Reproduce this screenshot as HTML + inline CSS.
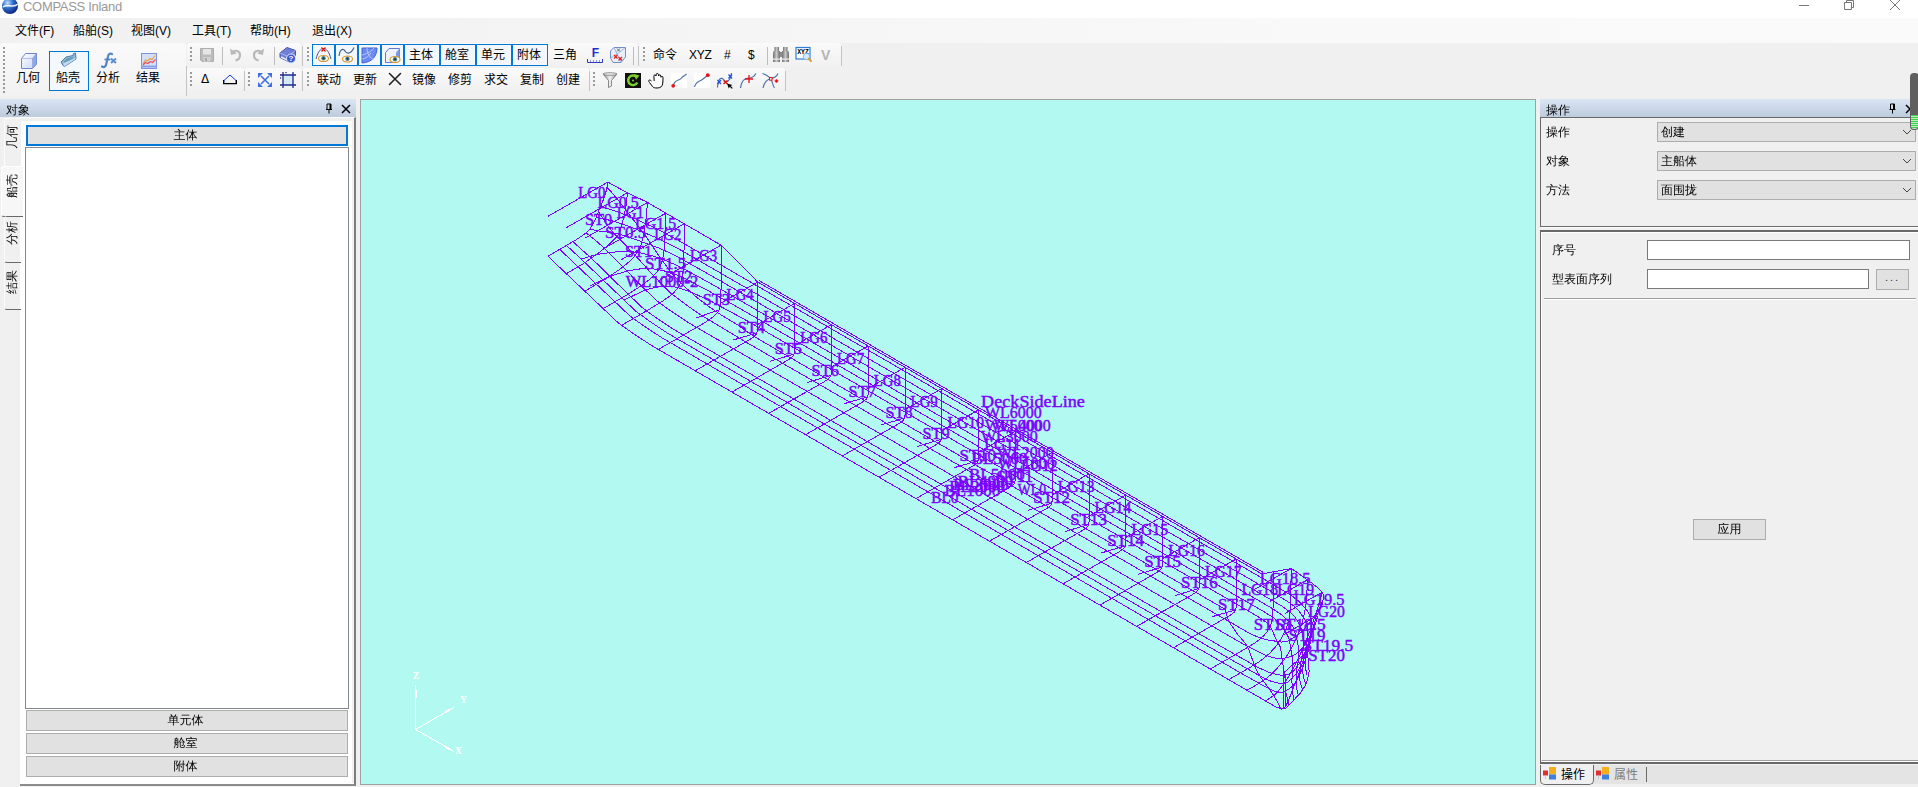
<!DOCTYPE html>
<html lang="zh"><head><meta charset="utf-8"><title>COMPASS Inland</title>
<style>
html,body{margin:0;padding:0;}
body{width:1918px;height:787px;overflow:hidden;position:relative;background:#f0f0f0;font-family:"Liberation Sans","Noto Sans CJK SC",sans-serif;font-size:12px;color:#000;}
.abs{position:absolute;}
.t{position:absolute;white-space:nowrap;line-height:14px;}
#titlebar{position:absolute;left:0;top:0;width:1918px;height:18px;background:#fff;}
#title{left:23px;top:-1px;font-size:13px;color:#999;line-height:16px;letter-spacing:-0.3px;}
#menubar{position:absolute;left:0;top:18px;width:1918px;height:25px;background:linear-gradient(to right,#f1f1f1 0,#f3f3f3 25%,#f8f8f8 60%,#fafafa 100%);}
#menubar .t{top:6px;font-size:12px;}
.tb{position:absolute;background:linear-gradient(#fafafa,#f1f1f1);border-radius:3px;}
.grip{position:absolute;width:2px;height:16px;background:repeating-linear-gradient(#9a9a9a 0 2px,transparent 2px 4px);}
.sep{position:absolute;width:1px;height:18px;background:#bdbdbd;}
.tbt{position:absolute;white-space:nowrap;font-size:12px;line-height:14px;}
.tog{position:absolute;box-sizing:border-box;border:1px solid #0078d7;background:#f3f7fc;height:23px;top:0;}
.hdr{position:absolute;height:18px;background:linear-gradient(#dbe6f3,#bccbdd);}
.sun{font-family:"Liberation Sans","WenQuanYi Zen Hei","Noto Sans CJK SC",sans-serif;}
.btn{position:absolute;box-sizing:border-box;border:1px solid #adadad;background:#e1e1e1;text-align:center;font-size:12px;}
.vtab{position:absolute;white-space:nowrap;font-size:12px;line-height:14px;transform-origin:0 0;transform:rotate(-90deg);}
.combo{position:absolute;box-sizing:border-box;border:1px solid #adadad;background:#e1e1e1;height:20px;font-size:12px;line-height:18px;padding-left:3px;}
.inp{position:absolute;box-sizing:border-box;border:1px solid #7a7a7a;background:#fff;height:20px;}

</style></head>
<body>
<div id="titlebar">
<svg class="abs" style="left:1px;top:-3px" width="18" height="18" viewBox="0 0 18 18"><defs><radialGradient id="gl" cx="35%" cy="30%" r="75%"><stop offset="0" stop-color="#bfe0ff"/><stop offset="0.45" stop-color="#2f6fd0"/><stop offset="1" stop-color="#0a1f78"/></radialGradient></defs><circle cx="9" cy="9" r="8" fill="url(#gl)"/><path d="M2 10 C6 6 12 12 17 7" stroke="#fff" stroke-width="1.6" fill="none" opacity=".9"/></svg>
<div class="t" id="title">COMPASS Inland</div>
<svg class="abs" style="left:1790px;top:0" width="128" height="18" viewBox="0 0 128 18" fill="none" stroke="#777" stroke-width="1"><path d="M9 5.5h10"/><path d="M54.5 2.5h7v7h-7z M56.5 2.5v-2h7v7h-2" /><path d="M100 0l10 10M110 0l-10 10"/></svg>
</div>

<div id="menubar">
<div class="t" style="left:15px">文件(F)</div>
<div class="t" style="left:73px">船舶(S)</div>
<div class="t" style="left:131px">视图(V)</div>
<div class="t" style="left:192px">工具(T)</div>
<div class="t" style="left:250px">帮助(H)</div>
<div class="t" style="left:312px">退出(X)</div>
</div>

<!-- toolbars -->
<div id="tbarea" class="abs" style="left:0;top:43px;width:1918px;height:56px;background:#f0f0f0"></div>
<!-- big toolbar -->
<div class="tb" style="left:0;top:43px;width:186px;height:54px"></div>
<div class="grip" style="left:3px;top:47px;height:46px"></div>
<div class="abs" style="left:186px;top:66px;width:1px;height:30px;background:#c4c4c4"></div>
<div class="abs" style="left:49px;top:51px;width:40px;height:40px;box-sizing:border-box;border:1px solid #0078d7;background:#f3f8fd"></div>
<svg class="abs" style="left:20px;top:52px" width="18" height="18" viewBox="0 0 18 18"><defs><linearGradient id="cb1" x1="0" y1="0" x2="1" y2="1"><stop offset="0" stop-color="#fff"/><stop offset="1" stop-color="#c9d6f6"/></linearGradient></defs><path d="M1.5 6.5 L5.5 1.5 H16.5 V12 L12.5 16.5 H1.5 Z" fill="url(#cb1)" stroke="#6f86cf" stroke-width="1" stroke-linejoin="round"/><path d="M12.5 6.5 L16.5 1.5 V12 L12.5 16.5 Z" fill="#8ea8e8" stroke="#6f86cf" stroke-width=".6"/><path d="M1.5 6.5 H12.5 V16.5" fill="none" stroke="#9fb1e3" stroke-width=".8"/></svg>
<svg class="abs" style="left:60px;top:52px" width="18" height="18" viewBox="0 0 18 18"><path d="M1 10 L6 5 L13 3.5 L13.5 1.5 L15.5 1 L16 7 L4.5 14.5 L3 13.5 Z" fill="#8fb6d6" stroke="#4f7fb5" stroke-width="1" stroke-linejoin="round"/><path d="M4 9.5 L7 6.5 L13 5 L13.5 7 L5 11.5Z" fill="#5d9fb0"/><path d="M3 11.5 L15.5 5.5 V7 L4.5 14.5 Z" fill="#c3d6f2"/></svg>
<svg class="abs" style="left:100px;top:52px" width="18" height="18" viewBox="0 0 18 18"><path d="M2 14.5 C4.5 16 6 14 6.5 11 L8 4.5 C8.5 2 10 1 12 2" fill="none" stroke="#4f86c9" stroke-width="2.2" stroke-linecap="round"/><path d="M4.5 7.5 H10.5" stroke="#4f86c9" stroke-width="1.8"/><path d="M11 6.5 L16 11 M16 6.5 L11 11" stroke="#5b8fd0" stroke-width="2"/></svg>
<svg class="abs" style="left:140px;top:52px" width="18" height="18" viewBox="0 0 18 18"><rect x="1.5" y="1.5" width="15" height="15" fill="#d7dff7" stroke="#7d93df" stroke-width="1"/><path d="M1.5 14.5 H16.5" stroke="#8aa0e6" stroke-width="2"/><path d="M3 12 L5.5 8 L7.5 9 L10 6.5 L12 7.5 L15 3.5" fill="none" stroke="#e3a04a" stroke-width="1.2"/><path d="M3 13 L5.5 10.5 L8 11.5 L10.5 9.5 L12.5 10.5 L15.5 7.5" fill="none" stroke="#e8505a" stroke-width="1.2"/></svg>
<div class="tbt" style="left:16px;top:71px">几何</div>
<div class="tbt" style="left:56px;top:71px">船壳</div>
<div class="tbt" style="left:96px;top:71px">分析</div>
<div class="tbt" style="left:136px;top:71px">结果</div>

<!-- toolbar 2 row 1 -->
<div class="tb" style="left:187px;top:43px;width:114px;height:23px"></div>
<div class="grip" style="left:190px;top:47px;height:14px"></div>
<svg class="abs" style="left:200px;top:48px" width="14" height="14" viewBox="0 0 14 14"><path d="M0.5 0.5 H13.5 V13.5 H2 L0.5 12 Z" fill="#bcbcbc" stroke="#adadad"/><rect x="3" y="1" width="8" height="5.5" fill="#e6e6e6"/><rect x="3.5" y="9" width="7" height="4.5" fill="#d2d2d2"/><rect x="5" y="10" width="2" height="3" fill="#a8a8a8"/></svg>
<div class="sep" style="left:222px;top:47px"></div>
<svg class="abs" style="left:229px;top:47px" width="14" height="15" viewBox="0 0 14 15"><path d="M3 5.5 C6 2.5 11 3.5 11 8 C11 11 9 13 6.5 13.5" fill="none" stroke="#b9b9b9" stroke-width="2.2"/><path d="M1 1.5 L2 8 L8 6.5 Z" fill="#b9b9b9"/></svg>
<svg class="abs" style="left:251px;top:47px" width="14" height="15" viewBox="0 0 14 15"><path d="M11 5.5 C8 2.5 3 3.5 3 8 C3 11 5 13 7.5 13.5" fill="none" stroke="#b9b9b9" stroke-width="2.2"/><path d="M13 1.5 L12 8 L6 6.5 Z" fill="#b9b9b9"/></svg>
<div class="sep" style="left:274px;top:47px"></div>
<svg class="abs" style="left:279px;top:46px" width="18" height="18" viewBox="0 0 18 18"><path d="M1 7 L8 1.5 L16.5 4.5 L16.5 9.5 L9 15.5 L1 11.5 Z" fill="#6f7fd6" stroke="#4453b5" stroke-width="1" stroke-linejoin="round"/><path d="M1 7 L9 10.5 L16.5 4.5" fill="none" stroke="#aab6ee" stroke-width="1"/><path d="M2 11 L9 14.5 L16 9" stroke="#e8ecfb" stroke-width="1.4" fill="none"/><circle cx="12" cy="12.5" r="4.5" fill="#3d57c9" stroke="#dfe6ff" stroke-width="1"/><text x="12" y="15.3" font-size="8" font-weight="bold" fill="#fff" text-anchor="middle" font-family="Liberation Sans,sans-serif">?</text></svg>
<div class="abs" style="left:302px;top:46px;width:1px;height:20px;background:#c4c4c4"></div>

<!-- toolbar 2 row 2 -->
<div class="tb" style="left:187px;top:68px;width:57px;height:23px"></div>
<div class="grip" style="left:190px;top:72px;height:14px"></div>
<div class="tbt" style="left:201px;top:72px;font-size:12px;font-family:'DejaVu Sans',sans-serif">Δ</div>
<svg class="abs" style="left:223px;top:74px" width="14" height="11" viewBox="0 0 14 11"><path d="M1 9.5 V6.5 L7 1 L13 6.5 V9.5" fill="none" stroke="#1c39d8" stroke-width="1"/><path d="M0.5 6 V9.7 H13.5 V6" fill="none" stroke="#000" stroke-width="1.2"/></svg>
<div class="abs" style="left:244px;top:71px;width:1px;height:20px;background:#c4c4c4"></div>
<div class="tb" style="left:245px;top:68px;width:56px;height:23px"></div>
<div class="grip" style="left:248px;top:72px;height:14px"></div>
<svg class="abs" style="left:257px;top:72px" width="16" height="16" viewBox="0 0 16 16" fill="#3f6fe0" stroke="#3f6fe0"><path d="M4 4 L12 12 M12 4 L4 12" stroke-width="1.6"/><path d="M1 1 H6 L1 6 Z M15 1 V6 L10 1 Z M1 15 V10 L6 15 Z M15 15 H10 L15 10 Z" stroke="none"/></svg>
<svg class="abs" style="left:279px;top:71px" width="18" height="18" viewBox="0 0 18 18"><rect x="4" y="4" width="10" height="10" fill="#d6e9f8"/><path d="M4 1 V17 M14 1 V17 M1 4 H17 M1 14 H17" stroke="#1f2a8c" stroke-width="1.3" fill="none"/><path d="M6 1 L8 1 L7 2.5Z M1 6 V8 L2.5 7Z" fill="#1f2a8c"/></svg>
<div class="abs" style="left:302px;top:71px;width:1px;height:20px;background:#c4c4c4"></div>
<!-- toolbar 3 row 1 -->
<div class="tb" style="left:303px;top:43px;width:335px;height:23px"></div>
<div class="grip" style="left:307px;top:47px;height:14px"></div>
<div class="abs" style="left:312px;top:44px;height:22px;width:236px">
 <div class="tog" style="left:0;width:23px;height:22px"></div>
 <div class="tog" style="left:23px;width:23px;height:22px"></div>
 <div class="tog" style="left:46px;width:23px;height:22px"></div>
 <div class="tog" style="left:69px;width:23px;height:22px"></div>
 <div class="tog" style="left:92px;width:36px;height:22px"></div>
 <div class="tog" style="left:128px;width:36px;height:22px"></div>
 <div class="tog" style="left:164px;width:36px;height:22px"></div>
 <div class="tog" style="left:200px;width:36px;height:22px"></div>
</div>
<!-- eye icons -->
<svg class="abs" style="left:315px;top:47px" width="17" height="17" viewBox="0 0 17 17"><path d="M1 12 C3 4 6 1.5 8.5 1.5 C11 1.5 14 4 16 12" fill="none" stroke="#3b5b8c" stroke-width="1"/><path d="M6.5 0.5 L10.5 4.5 M10.5 0.5 L6.5 4.5" stroke="#e01010" stroke-width="1.2"/><ellipse cx="8.5" cy="11.5" rx="5" ry="3" fill="#fff" stroke="#d89a2b" stroke-width="1.2"/><circle cx="8.5" cy="11.3" r="2.2" fill="#4f7f8f"/><circle cx="8.5" cy="11.3" r="1" fill="#17323a"/></svg>
<svg class="abs" style="left:338px;top:47px" width="17" height="17" viewBox="0 0 17 17"><path d="M1 9 C2 2 5 1 7 4 C9 7.5 13 7 16 0.5" fill="none" stroke="#3b5b8c" stroke-width="1.1"/><ellipse cx="9.5" cy="12" rx="5" ry="3" fill="#fff" stroke="#d89a2b" stroke-width="1.2"/><circle cx="9.5" cy="11.8" r="2.2" fill="#4f7f8f"/><circle cx="9.5" cy="11.8" r="1" fill="#17323a"/></svg>
<svg class="abs" style="left:361px;top:47px" width="17" height="17" viewBox="0 0 17 17"><path d="M1 1 H16 C16 9 11 15.5 1 16 Z" fill="#6b8bf0" stroke="#3f5fd6" stroke-width="1"/><path d="M1 8 C6 7 11 4 13 1 M6 1 C6 7 9 11 13 12.5 M1 12 C5 11.5 8 9 10 6" fill="none" stroke="#b9c9fb" stroke-width=".9"/></svg>
<svg class="abs" style="left:384px;top:47px" width="17" height="17" viewBox="0 0 17 17"><path d="M1.5 5.5 L5 1.5 H15.5 V11.5 L12 15.5 H1.5 Z" fill="#eef2fd" stroke="#5f7ad0" stroke-width="1" stroke-linejoin="round"/><path d="M12 5.5 L15.5 1.5 V11.5 L12 15.5 Z" fill="#7f9ae6"/><ellipse cx="11" cy="12.5" rx="5" ry="3" fill="#fff" stroke="#d89a2b" stroke-width="1.2"/><circle cx="11" cy="12.3" r="2.2" fill="#4f7f8f"/><circle cx="11" cy="12.3" r="1" fill="#17323a"/></svg>
<div class="tbt" style="left:409px;top:48px">主体</div>
<div class="tbt" style="left:445px;top:48px">舱室</div>
<div class="tbt" style="left:481px;top:48px">单元</div>
<div class="tbt" style="left:517px;top:48px">附体</div>
<div class="tbt" style="left:553px;top:48px">三角</div>
<svg class="abs" style="left:586px;top:47px" width="18" height="17" viewBox="0 0 18 17"><text x="9.5" y="10" font-size="12" font-weight="bold" fill="#1a2fd0" text-anchor="middle" font-family="Liberation Sans,sans-serif">F</text><path d="M1.5 12 V15.5 H16.5 V12" fill="none" stroke="#2a3bc0" stroke-width="1"/><path d="M4 14 h1 M7 14 h1 M10 14 h1 M13 14 h1" stroke="#2a3bc0" stroke-width="1"/></svg>
<svg class="abs" style="left:609px;top:46px" width="18" height="18" viewBox="0 0 18 18"><path d="M1.5 5 L5 1.5 H16.5 V11 L12 16.5 H4 L1.5 12 Z" fill="#e8eefb" stroke="#6f8fc6" stroke-width="1" stroke-linejoin="round"/><path d="M5 1.5 L8 8 L12 16.5 M16.5 1.5 L8 8 L1.5 12" fill="none" stroke="#8fa9d6" stroke-width=".8"/><path d="M8 2.5 l3 3 m0 -3 l-3 3" stroke="#666" stroke-width="1"/><path d="M5 9 l3.5 3.5 m0 -3.5 l-3.5 3.5 M9.5 11 l3.5 3.5 m0 -3.5 l-3.5 3.5" stroke="#e02020" stroke-width="1.2"/></svg>
<div class="sep" style="left:633px;top:47px"></div>
<div class="abs" style="left:638px;top:46px;width:1px;height:20px;background:#c4c4c4"></div>

<!-- toolbar 3 row 2 -->
<div class="tb" style="left:303px;top:68px;width:286px;height:23px"></div>
<div class="grip" style="left:307px;top:72px;height:14px"></div>
<div class="tbt" style="left:317px;top:73px">联动</div>
<div class="tbt" style="left:353px;top:73px">更新</div>
<svg class="abs" style="left:388px;top:72px" width="14" height="14" viewBox="0 0 14 14"><path d="M1.5 1.5 L12.5 12.5 M12.5 1.5 L1.5 12.5" stroke="#222" stroke-width="1.6" stroke-linecap="round"/></svg>
<div class="tbt" style="left:412px;top:73px">镜像</div>
<div class="tbt" style="left:448px;top:73px">修剪</div>
<div class="tbt" style="left:484px;top:73px">求交</div>
<div class="tbt" style="left:520px;top:73px">复制</div>
<div class="tbt" style="left:556px;top:73px">创建</div>
<div class="abs" style="left:589px;top:71px;width:1px;height:20px;background:#c4c4c4"></div>

<!-- toolbar 4 row 1 -->
<div class="tb" style="left:639px;top:43px;width:202px;height:23px"></div>
<div class="grip" style="left:643px;top:47px;height:14px"></div>
<div class="tbt" style="left:653px;top:48px">命令</div>
<div class="tbt" style="left:689px;top:48px;letter-spacing:-0.3px">XYZ</div>
<div class="tbt" style="left:724px;top:48px">#</div>
<div class="tbt" style="left:748px;top:48px">$</div>
<div class="sep" style="left:767px;top:47px"></div>
<svg class="abs" style="left:772px;top:46px" width="18" height="17" viewBox="0 0 18 17"><defs><linearGradient id="bn" x1="0" y1="0" x2="1" y2="0"><stop offset="0" stop-color="#6e6e6e"/><stop offset=".5" stop-color="#c9c9c9"/><stop offset="1" stop-color="#6a6a6a"/></linearGradient></defs><rect x="2.5" y="1" width="4.5" height="4" fill="url(#bn)"/><rect x="11" y="1" width="4.5" height="4" fill="url(#bn)"/><path d="M1.5 5 H8 V16 H1 V8 Z" fill="url(#bn)"/><path d="M10 5 H16.5 L17 8 V16 H10 Z" fill="url(#bn)"/><rect x="7.5" y="6" width="3" height="5" fill="#8a8a8a"/><rect x="1" y="12.5" width="7" height="1.2" fill="#efefef"/><rect x="10" y="12.5" width="7" height="1.2" fill="#efefef"/></svg>
<svg class="abs" style="left:795px;top:46px" width="18" height="18" viewBox="0 0 18 18"><rect x="1" y="1.5" width="14" height="11.5" fill="#fff" stroke="#2f7fd8" stroke-width="1.2"/><text x="8" y="8" font-size="6.5" font-weight="bold" fill="#000" text-anchor="middle" font-family="Liberation Mono,monospace">XYZ</text><circle cx="11.5" cy="10.5" r="3.2" fill="#d4ecfb" stroke="#7fb4e6" stroke-width="1"/><path d="M13.8 12.8 L16 15" stroke="#d8a030" stroke-width="2" stroke-linecap="round"/></svg>
<div class="tbt" style="left:821px;top:47px;font-size:14px;font-weight:bold;color:#b4b4b4;line-height:16px">V</div>
<div class="abs" style="left:841px;top:46px;width:1px;height:20px;background:#c4c4c4"></div>

<!-- toolbar 4 row 2 -->
<div class="tb" style="left:590px;top:68px;width:195px;height:23px"></div>
<div class="grip" style="left:593px;top:72px;height:14px"></div>
<svg class="abs" style="left:602px;top:72px" width="16" height="16" viewBox="0 0 16 16"><defs><linearGradient id="fn" x1="0" y1="0" x2="1" y2="0"><stop offset="0" stop-color="#8a8a8a"/><stop offset=".5" stop-color="#f2f2f2"/><stop offset="1" stop-color="#8a8a8a"/></linearGradient></defs><path d="M1 2 H15 L9.5 8.5 V14 L6.5 15.5 V8.5 Z" fill="url(#fn)" stroke="#707070" stroke-width=".8"/><ellipse cx="8" cy="2" rx="7" ry="1.3" fill="#e8e8e8" stroke="#707070" stroke-width=".7"/></svg>
<svg class="abs" style="left:625px;top:73px" width="16" height="15" viewBox="0 0 16 15"><rect width="16" height="15" fill="#101010"/><path d="M12.3 9.5 A4.8 4.8 0 1 1 11.5 4" fill="none" stroke="#7fd12b" stroke-width="2.4"/><path d="M9 1 L14.5 2.5 L11 6.8 Z" fill="#7fd12b"/><circle cx="8" cy="7.5" r="1" fill="#7fd12b"/></svg>
<svg class="abs" style="left:647px;top:72px" width="18" height="17" viewBox="0 0 18 17"><path d="M4.5 9 C2 7 0.8 8.5 2.5 10.5 L5.5 14.5 C6.5 15.8 8 16 10 16 C13.5 16 15.5 14.5 15.8 11 L16 5.5 C16 4 14.2 4 14 5.3 L13.8 4 C13.6 2.3 11.7 2.4 11.6 4 L11.4 2.6 C11.2 1 9.3 1 9.2 2.6 L9 4 C8.6 2.4 6.8 2.6 6.9 4.2 L7.2 9" fill="#fff" stroke="#000" stroke-width="1" stroke-linejoin="round"/></svg>
<svg class="abs" style="left:671px;top:73px" width="16" height="15" viewBox="0 0 16 15"><rect width="16" height="15" fill="#fff"/><path d="M2 13 C4 6 8 8 10 5.5 C12 3 14 2.5 15.5 1" fill="none" stroke="#4a6fa5" stroke-width="1.1"/><circle cx="2.2" cy="12.8" r="1.9" fill="#e8101c"/></svg>
<svg class="abs" style="left:694px;top:73px" width="16" height="15" viewBox="0 0 16 15"><rect width="16" height="15" fill="#fff"/><path d="M0.5 14 C2 7 6 9 9 6 C11 4 12.5 3.5 14 2" fill="none" stroke="#4a6fa5" stroke-width="1.1"/><circle cx="13.8" cy="2.2" r="1.9" fill="#e8101c"/></svg>
<svg class="abs" style="left:716px;top:72px" width="18" height="17" viewBox="0 0 18 17"><path d="M1.5 15.5 C2 6 5.5 4.5 8 8 C10.5 11.5 14.5 9 15.5 1" fill="none" stroke="#4a6fa5" stroke-width="1.2"/><path d="M1.5 8 l3.5 4 m0 -4 l-3.5 4 M12.5 2.5 l3.5 4 m0 -4 l-3.5 4" stroke="#1f4fe0" stroke-width="1.2"/><path d="M7.5 8.5 l4 3.5 m0 -3.5 l-4 3.5" stroke="#e01010" stroke-width="1.4"/><path d="M11 11.5 L16.5 13 L14.6 13.9 L16.8 16 L15.8 16.8 L13.8 14.7 L12.8 16.5 Z" fill="#000"/></svg>
<svg class="abs" style="left:740px;top:72px" width="17" height="17" viewBox="0 0 17 17"><path d="M0.5 16 C1.5 8 6 6 9 6 C12 6 14.5 4 16 1.5" fill="none" stroke="#4a6fa5" stroke-width="1.2"/><path d="M9 3 V11 M5 7 H13" stroke="#e8101c" stroke-width="1.3"/></svg>
<svg class="abs" style="left:762px;top:72px" width="18" height="17" viewBox="0 0 18 17"><path d="M0.5 1.5 C5 3 9 6 10 9.5 C10.8 12 11 14 12.5 16" fill="none" stroke="#4a6fa5" stroke-width="1.1"/><path d="M1 16 C2 10 6 7 9 6.5 C12 6 15 4 16 1.5" fill="none" stroke="#4a6fa5" stroke-width="1.1"/><rect x="7.5" y="5.5" width="2.6" height="2.6" fill="#fff" stroke="#e01010" stroke-width="1"/><path d="M14.5 7.2 V10.8 M12.7 9 H16.3" stroke="#e01010" stroke-width="1.6"/></svg>
<div class="abs" style="left:785px;top:71px;width:1px;height:20px;background:#c4c4c4"></div>

<!-- left panel -->
<div class="hdr" style="left:0;top:99px;width:356px"></div>
<div class="t sun" style="left:6px;top:103px;font-size:12px">对象</div>
<svg class="abs" style="left:323px;top:103px" width="29" height="12" viewBox="0 0 28 12"><path d="M2.5 6.5 H8.5 M3.5 6.5 V1 H7.5 V6.5 M5.5 6.5 V10.5" fill="none" stroke="#000" stroke-width="1"/><rect x="6" y="1" width="1.5" height="5.5" fill="#000"/><path d="M18.5 2 L26.5 10 M26.5 2 L18.5 10" stroke="#000" stroke-width="1.5"/></svg>
<div class="abs" style="left:0;top:117px;width:356px;height:668px;background:#f0f0f0"></div>
<div class="abs" style="left:20px;top:117px;width:334px;height:666px;background:#fff;border-top:1px solid #fdfdfd;border-right:2px solid #7c7c7c;border-bottom:2px solid #8c8c8c;"></div>
<div class="abs" style="left:21px;top:118px;width:333px;height:3px;background:#f0f0f0"></div>
<div class="abs" style="left:352px;top:118px;width:2px;height:665px;background:#f0f0f0"></div>
<!-- vertical tabs -->
<div class="abs" style="left:4px;top:118px;width:16px;height:48px;background:#f0f0f0;border-left:1px solid #fbfbfb;border-top:1px solid #fbfbfb;border-radius:3px 0 0 3px"></div>
<div class="abs" style="left:1px;top:166px;width:21px;height:49px;background:#f7f7f7;border-left:1px solid #fff;border-top:1px solid #fff;border-bottom:1px solid #696969;border-radius:3px 0 0 3px"></div>
<div class="abs" style="left:4px;top:216px;width:16px;height:46px;border-bottom:1px solid #696969;border-left:1px solid #fbfbfb;border-radius:3px 0 0 3px"></div>
<div class="abs" style="left:4px;top:263px;width:16px;height:46px;border-bottom:1px solid #696969;border-left:1px solid #fbfbfb;border-radius:3px 0 0 3px"></div>
<div class="vtab sun" style="left:5px;top:149px">几何</div>
<div class="vtab sun" style="left:5px;top:198px">船壳</div>
<div class="vtab sun" style="left:5px;top:245px">分析</div>
<div class="vtab sun" style="left:5px;top:294px">结果</div>
<!-- content -->
<div class="btn sun" style="left:26px;top:125px;width:322px;height:21px;border:2px solid #0078d7;line-height:17px;padding-right:3px">主体</div>
<div class="abs" style="left:25px;top:147px;width:324px;height:562px;box-sizing:border-box;border:1px solid #828790;background:#fff"></div>
<div class="btn sun" style="left:26px;top:710px;width:322px;height:21px;line-height:19px;padding-right:3px">单元体</div>
<div class="btn sun" style="left:26px;top:733px;width:322px;height:21px;line-height:19px;padding-right:3px">舱室</div>
<div class="btn sun" style="left:26px;top:756px;width:322px;height:21px;line-height:19px;padding-right:3px">附体</div>

<!-- viewport -->
<div id="viewport" class="abs" style="left:360px;top:99px;width:1176px;height:686px;box-sizing:border-box;border:1px solid #a0a0a0;background:#b2faf1"></div>
<svg class="abs" style="left:361px;top:100px" width="1174" height="684" viewBox="361 100 1174 684">
<g fill="none" stroke="#7f00ff" stroke-width="1" shape-rendering="crispEdges">
<polyline points="547.9,256.2 576.9,239.3 584.6,234.0 589.2,229.9 591.5,226.4 595.5,218.9 602.5,202.0 606.1,191.3 607.9,182.1"/>
<polyline points="566.3,273.7 583.9,263.3 597.9,253.5 609.2,244.2 613.9,239.8 617.0,236.4 618.4,234.2 620.0,230.5 624.0,216.0 626.5,203.5 627.3,192.8"/>
<polyline points="584.7,291.2 605.3,279.1 620.7,268.7 630.6,260.5 634.2,256.7 637.4,252.5 639.0,249.9 640.7,245.8 643.7,234.3 646.3,216.8 647.5,202.5"/>
<polyline points="603.1,308.7 627.2,294.7 642.9,284.7 652.5,277.0 656.4,272.6 658.6,269.6 660.1,266.8 661.8,262.0 663.0,257.2 663.9,251.3 665.4,232.6 665.8,213.2"/>
<polyline points="621.5,325.3 647.6,310.3 662.9,301.0 669.0,296.6 673.4,293.0 676.4,289.8 678.8,286.7 680.3,283.7 682.0,278.4 683.1,270.4 684.1,247.6 684.2,223.8"/>
<polyline points="658.3,349.5 705.3,322.4 713.3,316.8 717.9,311.9 718.8,310.4 719.9,306.9 720.6,301.7 721.0,289.0 721.0,245.1"/>
<polyline points="695.1,370.8 748.9,340.1 753.4,337.1 755.9,334.8 757.4,331.5 757.8,328.5 757.8,282.1"/>
<polyline points="731.9,392.1 787.4,360.4 790.4,358.5 793.1,356.2 794.0,354.5 794.6,351.4 794.6,303.4"/>
<polyline points="768.7,413.4 824.2,381.7 827.2,379.8 829.9,377.5 830.8,375.8 831.4,372.7 831.4,324.7"/>
<polyline points="805.5,434.7 861.0,403.0 864.0,401.1 866.7,398.8 867.6,397.1 868.2,394.0 868.2,346.0"/>
<polyline points="842.3,456.0 897.8,424.3 900.8,422.4 903.5,420.1 904.4,418.4 905.0,415.3 905.0,367.3"/>
<polyline points="879.1,477.3 934.6,445.6 937.6,443.7 940.3,441.4 941.2,439.7 941.8,436.6 941.8,388.6"/>
<polyline points="915.9,498.6 971.4,466.9 974.4,465.0 977.1,462.7 978.0,461.0 978.6,457.9 978.6,409.9"/>
<polyline points="952.7,519.9 1008.2,488.2 1011.2,486.3 1013.9,484.0 1014.8,482.3 1015.4,479.2 1015.4,431.2"/>
<polyline points="989.5,541.2 1045.0,509.5 1048.0,507.6 1050.7,505.3 1051.6,503.6 1052.2,500.5 1052.2,452.5"/>
<polyline points="1026.3,562.5 1081.8,530.8 1084.8,528.9 1087.5,526.6 1088.4,524.9 1089.0,521.8 1089.0,473.8"/>
<polyline points="1063.1,583.8 1118.6,552.1 1121.6,550.2 1124.3,547.9 1125.2,546.2 1125.8,543.1 1125.8,495.1"/>
<polyline points="1099.9,605.1 1155.4,573.4 1158.4,571.5 1161.1,569.2 1162.0,567.5 1162.6,564.4 1162.6,516.4"/>
<polyline points="1136.7,626.4 1192.2,594.7 1195.2,592.8 1197.9,590.5 1198.8,588.8 1199.4,585.7 1199.4,537.7"/>
<polyline points="1173.5,647.7 1229.0,616.0 1232.0,614.1 1234.7,611.8 1235.6,610.1 1236.2,607.0 1236.2,559.0"/>
<polyline points="1210.3,669.0 1238.6,652.8 1253.5,643.9 1258.0,640.6 1263.6,635.8 1266.2,632.9 1268.6,629.5 1270.3,626.3 1271.5,623.0 1272.5,618.2 1273.0,607.8 1273.0,571.8"/>
<polyline points="1228.7,679.7 1250.7,667.0 1260.1,661.1 1263.2,658.8 1269.4,653.4 1274.9,647.7 1278.7,642.7 1282.0,637.3 1285.4,630.5 1287.4,625.0 1288.8,619.9 1289.9,613.3 1290.6,606.8 1290.9,597.5 1291.1,568.6"/>
<polyline points="1247.1,690.3 1261.6,681.8 1267.2,677.8 1271.4,674.2 1276.8,668.6 1282.8,661.6 1287.1,655.3 1291.9,647.2 1295.9,639.2 1299.3,631.0 1301.9,623.0 1304.1,615.1 1305.5,607.4 1306.7,598.4 1307.4,579.9"/>
<polyline points="1265.5,701.0 1273.3,695.9 1275.7,693.9 1279.1,690.2 1288.1,677.5 1294.7,665.9 1302.3,649.8 1310.5,629.4 1317.0,610.6 1322.3,592.1"/>
<polyline points="1283.9,708.7 1285.6,706.6 1288.9,699.4 1298.1,675.7 1309.9,640.4 1313.2,628.8 1316.3,616.1"/>
<polyline points="624.3,299.9 641.5,291.7 649.3,288.9 659.2,286.7 666.0,286.2 671.4,286.5 676.0,287.2 683.9,289.5 696.1,294.4 712.4,302.0 750.4,322.6 1256.7,615.8 1264.9,621.2 1267.2,623.3 1271.0,627.9 1273.0,631.8 1275.1,637.4 1280.0,646.4 1281.1,650.9 1282.2,660.4 1285.7,682.2 1285.9,692.2 1288.8,704.1 1288.4,706.0"/>
<polyline points="589.8,286.0 608.4,277.1 616.3,274.3 628.3,270.8 640.8,268.8 647.1,268.6 652.5,268.8 661.9,270.3 667.9,271.9 675.4,274.4 685.4,278.8 707.2,290.1 738.6,307.7 1265.6,612.7 1273.9,618.1 1277.6,621.1 1280.5,624.5 1286.3,633.0 1288.9,638.3 1291.7,653.6 1292.7,661.5 1293.0,669.8 1291.8,680.7 1293.4,700.1"/>
<polyline points="581.6,258.9 593.6,255.4 602.8,253.5 617.9,251.7 624.5,251.3 630.2,251.5 642.0,253.2 654.2,256.4 666.9,261.0 680.1,266.9 701.5,278.4 722.4,290.2 1272.9,608.8 1282.3,615.3 1289.1,621.6 1291.8,625.2 1293.2,627.7 1295.8,634.7 1297.9,643.7 1298.8,653.3 1298.8,658.4 1297.0,667.9 1296.5,674.9 1296.7,688.4 1297.2,691.5 1298.1,694.3"/>
<polyline points="589.7,229.2 598.6,230.9 615.3,233.2 625.5,235.9 658.1,247.7 669.7,252.9 682.2,259.3 721.0,281.2 1281.6,605.9 1290.7,612.6 1294.8,617.0 1297.3,620.6 1299.4,624.5 1301.2,628.6 1302.5,632.9 1303.4,639.1 1303.6,647.5 1300.6,664.5 1299.8,676.8 1299.9,680.1 1300.4,683.2 1302.4,688.8"/>
<polyline points="596.2,217.4 605.0,219.1 613.2,221.2 622.8,224.1 631.9,227.4 659.2,238.9 681.0,250.2 1273.0,592.5 1287.3,601.3 1293.9,606.0 1299.2,611.4 1304.3,618.7 1305.5,621.4 1306.9,625.7 1307.9,631.9 1307.8,638.6 1303.8,657.9 1302.6,668.7 1302.7,672.1 1303.5,676.7 1304.7,681.1 1306.1,683.7"/>
<polyline points="600.6,206.7 608.6,208.9 618.1,211.9 635.5,218.9 658.3,229.6 679.7,241.1 1273.0,584.4 1291.7,595.7 1299.1,601.6 1306.4,609.4 1309.3,614.4 1310.4,617.2 1311.5,621.7 1312.0,626.5 1311.6,630.0 1307.4,647.7 1305.2,659.1 1305.2,664.2 1306.6,675.2"/>
<polyline points="559.8,249.4 628.9,315.0 633.4,318.5 645.1,326.8 662.8,338.3 1241.3,673.3 1264.9,686.6 1273.7,690.9 1278.1,692.5 1279.6,692.7 1281.0,692.6 1284.0,691.7 1288.4,689.4 1291.3,687.2 1294.3,684.0 1297.2,679.8 1301.7,670.4 1307.5,653.9 1310.5,642.2"/>
<polyline points="566.6,245.5 584.2,261.9 635.7,311.1 650.5,321.9 668.1,333.5 1230.4,659.2 1259.9,675.9 1270.2,680.9 1277.5,683.0 1281.9,683.5 1284.9,683.3 1287.8,682.1 1289.3,681.0 1293.7,676.4 1296.7,672.9 1299.6,668.3 1302.6,662.6 1307.0,651.4 1311.4,635.3"/>
<polyline points="572.9,241.7 592.1,258.9 623.0,289.2 642.1,307.4 646.5,310.9 656.8,318.2 674.5,329.9 1225.0,648.7 1257.4,667.1 1267.7,671.9 1276.6,674.6 1281.0,675.2 1285.4,675.0 1288.3,674.3 1291.3,673.0 1294.2,670.3 1297.2,666.4 1301.6,659.8 1304.5,654.2 1308.9,643.4 1311.9,633.4 1313.4,627.0"/>
<polyline points="586.1,232.8 596.4,241.1 606.7,250.4 636.2,280.6 655.3,299.5 659.7,303.1 670.0,310.4 689.2,323.1 1236.8,640.4 1250.0,647.7 1266.2,655.4 1273.6,657.8 1278.0,658.4 1283.9,658.2 1288.3,657.4 1292.7,655.8 1297.1,653.2 1300.0,650.6 1303.0,647.4 1305.9,643.3 1310.4,635.2 1314.8,625.8 1317.7,616.2"/>
<polyline points="598.5,211.8 607.3,225.1 613.2,232.5 632.4,252.2 650.0,271.8 664.7,287.4 670.6,293.0 678.0,298.7 689.8,307.4 701.5,315.4 745.7,341.9 1249.1,633.1 1259.4,637.7 1266.8,639.8 1281.5,642.1 1285.9,641.6 1288.9,640.6 1294.8,637.1 1299.2,633.9 1302.1,631.4 1306.5,626.7 1316.8,612.5 1319.8,607.4 1322.7,600.9"/>
<polyline points="607.0,187.4 611.4,192.1 618.8,201.0 639.4,227.6 646.8,237.7 660.0,257.5 670.3,271.1 676.2,278.2 683.6,285.7 695.3,296.2 705.6,304.2 715.9,311.5 723.3,316.3 736.6,324.2 752.7,335.6 779.2,351.2 1225.3,609.4 1227.2,617.0 1230.3,623.7 1237.0,633.5 1244.7,642.6 1247.2,646.2 1249.1,650.3 1255.1,667.1 1256.9,671.1 1261.6,678.6 1268.7,688.1 1272.8,694.2 1278.2,703.0 1281.4,709.6"/>
<polyline points="547.9,256.2 617.1,321.8 621.5,325.3 633.3,333.5 650.9,345.1 1275.1,706.5 1278.0,707.7 1282.4,708.6 1285.4,708.4 1286.8,707.5 1300.1,693.3 1303.0,689.3 1306.0,684.1 1308.2,676.7 1309.1,671.3 1308.6,663.2 1306.7,647.2"/>
<polyline points="607.9,182.1 628.1,193.2 646.0,201.6 721.0,245.1 757.8,282.1 1261.2,573.5 1262.7,573.8 1290.3,568.7 1291.8,569.0 1295.9,571.6 1312.5,583.6 1318.6,588.4 1322.7,592.7 1323.5,595.5 1322.8,602.5 1321.1,606.8 1316.3,616.1 1313.0,627.9 1310.7,639.2 1308.0,645.6 1306.7,647.2"/>
<polyline points="759.0,280.5 1263.1,572.3"/>
<polyline points="547.9,216.4 607.9,182.1"/>
<polyline points="566.3,227.7 627.3,192.8"/>
<polyline points="584.7,238.3 647.5,202.5"/>
<polyline points="603.1,249.0 665.8,213.2"/>
<polyline points="621.5,259.6 684.2,223.8"/>
<polyline points="658.3,280.9 721.0,245.1"/>
<polyline points="757.8,282.1 720.2,303.5"/>
<polyline points="757.0,333.0 733.4,339.9"/>
<polyline points="794.6,303.4 757.0,324.8"/>
<polyline points="793.8,354.3 770.2,361.2"/>
<polyline points="831.4,324.7 793.8,346.1"/>
<polyline points="830.6,375.6 807.0,382.5"/>
<polyline points="868.2,346.0 830.6,367.4"/>
<polyline points="867.4,396.9 843.8,403.8"/>
<polyline points="905.0,367.3 867.4,388.7"/>
<polyline points="904.2,418.2 880.6,425.1"/>
<polyline points="941.8,388.6 904.2,410.0"/>
<polyline points="941.0,439.5 917.4,446.4"/>
<polyline points="978.6,409.9 941.0,431.3"/>
<polyline points="977.8,460.8 954.2,467.7"/>
<polyline points="1015.4,431.2 977.8,452.6"/>
<polyline points="1014.6,482.1 991.0,489.0"/>
<polyline points="1052.2,452.5 1014.6,473.9"/>
<polyline points="1051.4,503.4 1027.8,510.3"/>
<polyline points="1089.0,473.8 1051.4,495.2"/>
<polyline points="1088.2,524.7 1064.6,531.6"/>
<polyline points="1125.8,495.1 1088.2,516.5"/>
<polyline points="1125.0,546.0 1101.4,552.9"/>
<polyline points="1162.6,516.4 1125.0,537.8"/>
<polyline points="1161.8,567.3 1138.2,574.2"/>
<polyline points="1199.4,537.7 1161.8,559.1"/>
<polyline points="1198.6,588.6 1175.0,595.5"/>
<polyline points="1236.2,559.0 1198.6,580.4"/>
<polyline points="1235.4,609.9 1211.8,616.8"/>
<polyline points="719.1,309.9 696.6,317.8"/>
<polyline points="1291.1,568.6 1253.5,590.0"/>
<polyline points="1307.4,579.9 1269.9,601.3"/>
<polyline points="1322.3,592.1 1284.8,613.5"/>
<polyline points="1316.3,616.1 1283.9,634.7"/>
<polyline points="1283.9,708.7 1283.9,672.7 1307.4,651.5"/>
<polyline points="1283.9,672.7 1285.9,675.2 1285.9,705.5"/>
</g>
<g fill="#7f00ff" stroke="#7f00ff" stroke-width="0.45" font-family="Liberation Serif,serif" font-size="16.5">
<text x="578.3" y="197.5" textLength="27.2" lengthAdjust="spacingAndGlyphs">LG0</text>
<text x="597.5" y="207.5" textLength="41.2" lengthAdjust="spacingAndGlyphs">LG0.5</text>
<text x="616.7" y="218.3" textLength="27.2" lengthAdjust="spacingAndGlyphs">LG1</text>
<text x="635.0" y="229.2" textLength="41.2" lengthAdjust="spacingAndGlyphs">LG1.5</text>
<text x="654.2" y="240.0" textLength="27.2" lengthAdjust="spacingAndGlyphs">LG2</text>
<text x="585.0" y="225.0" textLength="27.2" lengthAdjust="spacingAndGlyphs">ST0</text>
<text x="605.0" y="238.3" textLength="41.2" lengthAdjust="spacingAndGlyphs">ST0.5</text>
<text x="625.0" y="256.7" textLength="27.2" lengthAdjust="spacingAndGlyphs">ST1</text>
<text x="645.0" y="269.2" textLength="41.2" lengthAdjust="spacingAndGlyphs">ST1.5</text>
<text x="665.0" y="281.7" textLength="27.2" lengthAdjust="spacingAndGlyphs">ST2</text>
<text x="625.8" y="286.7" textLength="72.4" lengthAdjust="spacingAndGlyphs">WL1000-2</text>
<text x="690.0" y="261.3" textLength="27.2" lengthAdjust="spacingAndGlyphs">LG3</text>
<text x="702.8" y="304.7" textLength="27.2" lengthAdjust="spacingAndGlyphs">ST3</text>
<text x="726.6" y="300.4" textLength="27.2" lengthAdjust="spacingAndGlyphs">LG4</text>
<text x="737.7" y="333.2" textLength="27.2" lengthAdjust="spacingAndGlyphs">ST4</text>
<text x="763.4" y="321.7" textLength="27.2" lengthAdjust="spacingAndGlyphs">LG5</text>
<text x="774.7" y="354.4" textLength="27.2" lengthAdjust="spacingAndGlyphs">ST5</text>
<text x="800.2" y="343.0" textLength="27.2" lengthAdjust="spacingAndGlyphs">LG6</text>
<text x="811.6" y="375.7" textLength="27.2" lengthAdjust="spacingAndGlyphs">ST6</text>
<text x="837.0" y="364.3" textLength="27.2" lengthAdjust="spacingAndGlyphs">LG7</text>
<text x="848.6" y="396.9" textLength="27.2" lengthAdjust="spacingAndGlyphs">ST7</text>
<text x="873.8" y="385.6" textLength="27.2" lengthAdjust="spacingAndGlyphs">LG8</text>
<text x="885.5" y="418.2" textLength="27.2" lengthAdjust="spacingAndGlyphs">ST8</text>
<text x="910.6" y="406.9" textLength="27.2" lengthAdjust="spacingAndGlyphs">LG9</text>
<text x="922.5" y="439.4" textLength="27.2" lengthAdjust="spacingAndGlyphs">ST9</text>
<text x="947.4" y="428.2" textLength="36.7" lengthAdjust="spacingAndGlyphs">LG10</text>
<text x="959.4" y="460.7" textLength="36.7" lengthAdjust="spacingAndGlyphs">ST10</text>
<text x="984.2" y="449.5" textLength="36.7" lengthAdjust="spacingAndGlyphs">LG11</text>
<text x="996.4" y="481.9" textLength="36.7" lengthAdjust="spacingAndGlyphs">ST11</text>
<text x="1021.0" y="470.8" textLength="36.7" lengthAdjust="spacingAndGlyphs">LG12</text>
<text x="1033.3" y="503.2" textLength="36.7" lengthAdjust="spacingAndGlyphs">ST12</text>
<text x="1057.8" y="492.1" textLength="36.7" lengthAdjust="spacingAndGlyphs">LG13</text>
<text x="1070.2" y="524.5" textLength="36.7" lengthAdjust="spacingAndGlyphs">ST13</text>
<text x="1094.6" y="513.4" textLength="36.7" lengthAdjust="spacingAndGlyphs">LG14</text>
<text x="1107.2" y="545.7" textLength="36.7" lengthAdjust="spacingAndGlyphs">ST14</text>
<text x="1131.4" y="534.7" textLength="36.7" lengthAdjust="spacingAndGlyphs">LG15</text>
<text x="1144.2" y="567.0" textLength="36.7" lengthAdjust="spacingAndGlyphs">ST15</text>
<text x="1168.2" y="556.0" textLength="36.7" lengthAdjust="spacingAndGlyphs">LG16</text>
<text x="1181.1" y="588.2" textLength="36.7" lengthAdjust="spacingAndGlyphs">ST16</text>
<text x="1205.0" y="577.3" textLength="36.7" lengthAdjust="spacingAndGlyphs">LG17</text>
<text x="1218.1" y="609.5" textLength="36.7" lengthAdjust="spacingAndGlyphs">ST17</text>
<text x="1259.7" y="583.9" textLength="50.8" lengthAdjust="spacingAndGlyphs">LG18.5</text>
<text x="1241.4" y="594.9" textLength="36.7" lengthAdjust="spacingAndGlyphs">LG18</text>
<text x="1277.3" y="594.9" textLength="36.7" lengthAdjust="spacingAndGlyphs">LG19</text>
<text x="1293.8" y="605.2" textLength="50.8" lengthAdjust="spacingAndGlyphs">LG19.5</text>
<text x="1308.2" y="617.3" textLength="36.7" lengthAdjust="spacingAndGlyphs">LG20</text>
<text x="1253.7" y="629.7" textLength="36.7" lengthAdjust="spacingAndGlyphs">ST18</text>
<text x="1275.0" y="629.7" textLength="50.8" lengthAdjust="spacingAndGlyphs">ST18.5</text>
<text x="1288.7" y="640.7" textLength="36.7" lengthAdjust="spacingAndGlyphs">ST19</text>
<text x="1302.5" y="650.5" textLength="50.8" lengthAdjust="spacingAndGlyphs">ST19.5</text>
<text x="1308.2" y="660.8" textLength="36.7" lengthAdjust="spacingAndGlyphs">ST20</text>
<text x="981.1" y="406.9" textLength="103.8" lengthAdjust="spacingAndGlyphs">DeckSideLine</text>
<text x="984.9" y="418.2" textLength="56.8" lengthAdjust="spacingAndGlyphs">WL6000</text>
<text x="985.0" y="431.4" textLength="56.8" lengthAdjust="spacingAndGlyphs">WL5000</text>
<text x="994.0" y="431.4" textLength="56.8" lengthAdjust="spacingAndGlyphs">WL4000</text>
<text x="981.0" y="442.2" textLength="56.8" lengthAdjust="spacingAndGlyphs">WL3000</text>
<text x="997.0" y="458.3" textLength="56.8" lengthAdjust="spacingAndGlyphs">WL2000</text>
<text x="998.0" y="468.8" textLength="56.8" lengthAdjust="spacingAndGlyphs">WL1000</text>
<text x="971.7" y="464.3" textLength="55.8" lengthAdjust="spacingAndGlyphs">BL5000</text>
<text x="968.9" y="479.9" textLength="55.8" lengthAdjust="spacingAndGlyphs">BL5000</text>
<text x="957.6" y="487.4" textLength="55.8" lengthAdjust="spacingAndGlyphs">BL4000</text>
<text x="953.0" y="489.5" textLength="55.8" lengthAdjust="spacingAndGlyphs">BL3000</text>
<text x="949.2" y="491.8" textLength="55.8" lengthAdjust="spacingAndGlyphs">BL2000</text>
<text x="944.5" y="495.9" textLength="55.8" lengthAdjust="spacingAndGlyphs">BL1000</text>
<text x="931.3" y="503.4" textLength="27.2" lengthAdjust="spacingAndGlyphs">BL0</text>
<text x="1017.8" y="494.9" textLength="28.2" lengthAdjust="spacingAndGlyphs">WL0</text>
</g>
<g stroke="#fff" stroke-width="1" fill="none" shape-rendering="crispEdges"><path d="M415.5 729.5 V685 M415.5 729.5 L454 707.5 M415.5 729.5 L454 751.5"/><path d="M415.5 690 V698 M445 712.5 L450 709.5 M445 746.5 L450 749.5" stroke-width="2"/></g>
<g fill="#fff" font-family="Liberation Serif,serif" font-weight="bold" font-size="9.5"><text x="413" y="679">Z</text><text x="460" y="703">Y</text><text x="455" y="754">X</text></g>
</svg>

<!-- right panel -->
<div class="hdr" style="left:1540px;top:99px;width:378px"></div>
<div class="t sun" style="left:1546px;top:103px;font-size:12px">操作</div>
<svg class="abs" style="left:1887px;top:103px" width="31" height="12" viewBox="0 0 31 12"><path d="M2.5 6.5 H8.5 M3.5 6.5 V1 H7.5 V6.5 M5.5 6.5 V10.5" fill="none" stroke="#000" stroke-width="1"/><rect x="6" y="1" width="1.5" height="5.5" fill="#000"/><path d="M19 2 L27 10 M27 2 L19 10" stroke="#000" stroke-width="1.5"/></svg>
<!-- group 1 -->
<div class="abs" style="left:1540px;top:117px;width:378px;height:110px;box-sizing:border-box;border-left:1px solid #696969;border-top:1px solid #696969;border-bottom:1px solid #696969;"></div>
<div class="abs" style="left:1541px;top:227px;width:377px;height:1px;background:#fff"></div>
<div class="t sun" style="left:1546px;top:125px">操作</div>
<div class="t sun" style="left:1546px;top:154px">对象</div>
<div class="t sun" style="left:1546px;top:183px">方法</div>
<div class="combo sun" style="left:1657px;top:122px;width:259px">创建</div>
<div class="combo sun" style="left:1657px;top:151px;width:259px">主船体</div>
<div class="combo sun" style="left:1657px;top:180px;width:259px">面围拢</div>
<svg class="abs" style="left:1902px;top:129px" width="10" height="6" viewBox="0 0 10 6"><path d="M1 1 L5 5 L9 1" fill="none" stroke="#444" stroke-width="1"/></svg>
<svg class="abs" style="left:1902px;top:158px" width="10" height="6" viewBox="0 0 10 6"><path d="M1 1 L5 5 L9 1" fill="none" stroke="#444" stroke-width="1"/></svg>
<svg class="abs" style="left:1902px;top:187px" width="10" height="6" viewBox="0 0 10 6"><path d="M1 1 L5 5 L9 1" fill="none" stroke="#444" stroke-width="1"/></svg>
<!-- group 2 -->
<div class="abs" style="left:1540px;top:230px;width:378px;height:534px;box-sizing:border-box;border-left:1px solid #696969;border-top:2px solid #696969;border-bottom:2px solid #696969;"></div>
<div class="abs" style="left:1541px;top:232px;width:377px;height:529px;box-sizing:border-box;border-left:1px solid #fff;border-top:1px solid #fff;border-bottom:1px solid #a0a0a0;"></div>
<div class="abs" style="left:1543px;top:761px;width:375px;height:1px;background:#fff"></div>
<div class="t sun" style="left:1552px;top:243px">序号</div>
<div class="inp" style="left:1647px;top:240px;width:263px"></div>
<div class="t sun" style="left:1552px;top:272px">型表面序列</div>
<div class="inp" style="left:1647px;top:269px;width:222px"></div>
<div class="btn" style="left:1876px;top:269px;width:33px;height:21px;line-height:15px;letter-spacing:2px;color:#333;font-size:11px">...</div>
<div class="abs" style="left:1544px;top:298px;width:372px;height:1px;background:#a0a0a0"></div>
<div class="abs" style="left:1544px;top:299px;width:372px;height:1px;background:#fff"></div>
<div class="btn sun" style="left:1693px;top:519px;width:73px;height:21px;line-height:19px">应用</div>
<!-- bottom tabs -->
<div class="abs" style="left:1540px;top:765px;width:378px;height:19px;background:#e4e4e4"></div>
<div class="abs" style="left:1540px;top:765px;width:54px;height:20px;box-sizing:border-box;background:#f0f0f0;border:1px solid #696969;border-top:none;border-radius:0 0 5px 5px"></div>
<svg class="abs" style="left:1543px;top:767px" width="14" height="14" viewBox="0 0 14 14"><rect x="0" y="3.5" width="5" height="5" fill="#e03030"/><rect x="2" y="8.5" width="1" height="3.5" fill="#c8c8c8"/><rect x="6" y="0" width="7" height="7.5" fill="#f2b01e"/><rect x="6" y="7.5" width="7" height="5" fill="#3f7fe0"/></svg>
<div class="t" style="left:1561px;top:768px;font-size:12px">操作</div>
<svg class="abs" style="left:1596px;top:767px" width="14" height="14" viewBox="0 0 14 14"><rect x="0" y="3.5" width="5" height="5" fill="#e03030"/><rect x="2" y="8.5" width="1" height="3.5" fill="#c8c8c8"/><rect x="6" y="0" width="7" height="7.5" fill="#f2b01e"/><rect x="6" y="7.5" width="7" height="5" fill="#3f7fe0"/></svg>
<div class="t" style="left:1614px;top:768px;font-size:12px;color:#808080">属性</div>
<div class="abs" style="left:1646px;top:767px;width:1px;height:15px;background:#696969"></div>
<!-- odd scrollbar overlay -->
<div class="abs" style="left:1910px;top:73px;width:9px;height:44px;background:#5f5f5f;border-radius:4px 4px 0 0"></div>
<div class="abs" style="left:1910px;top:115px;width:9px;height:15px;border-radius:0 0 4px 4px;background:repeating-linear-gradient(#3fd24f 0 1px,#b7f0bd 1px 2px);border:1px solid #5f5f5f;border-top:none;box-sizing:border-box"></div>

</body></html>
